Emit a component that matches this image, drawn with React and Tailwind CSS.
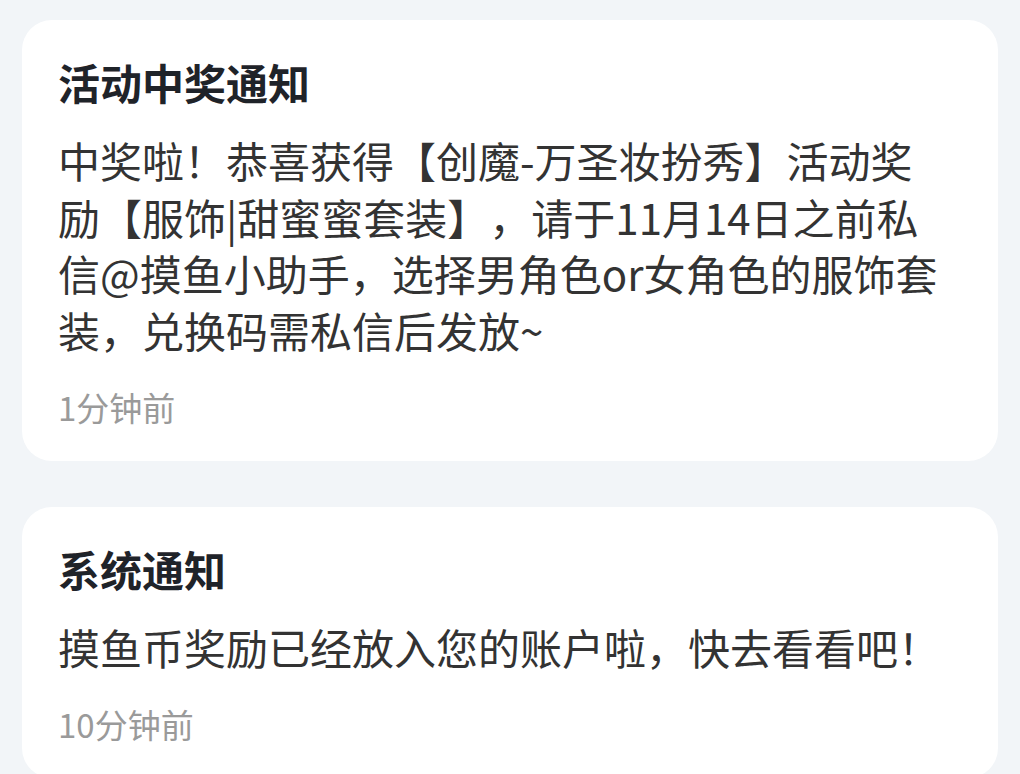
import React from "react";

function Card({ title, children, time }) {
  return (
    <div className="bg-white rounded-[30px] px-[36px] pt-[33px] pb-[32px]">
      <div className="text-[42px] font-bold leading-[58px] text-[#1f2329]">{title}</div>
      <div className="mt-[21px] text-[42px] leading-[56.7px] text-[#333333] whitespace-nowrap [text-spacing-trim:space-all]">{children}</div>
      <div className="mt-[26px] text-[33px] leading-[44px] text-[#9a9a9a]">{time}</div>
    </div>
  );
}

export default function App() {
  return (
    <div
      className="min-h-screen bg-[#f2f5f8] px-[22px] pt-[20px] flex flex-col gap-[46px]"
      style={{ fontFamily: '"Noto Sans CJK SC", "Noto Sans", sans-serif' }}
    >
      <Card title="活动中奖通知" time="1分钟前">
        中奖啦！恭喜获得【创魔-万圣妆扮秀】活动奖
        <br />
        励【服饰|甜蜜蜜套装】，请于11月14日之前私
        <br />
        信@摸鱼小助手，选择男角色or女角色的服饰套
        <br />
        装，兑换码需私信后发放~
      </Card>
      <Card title="系统通知" time="10分钟前">
        摸鱼币奖励已经放入您的账户啦，快去看看吧！
      </Card>
    </div>
  );
}
